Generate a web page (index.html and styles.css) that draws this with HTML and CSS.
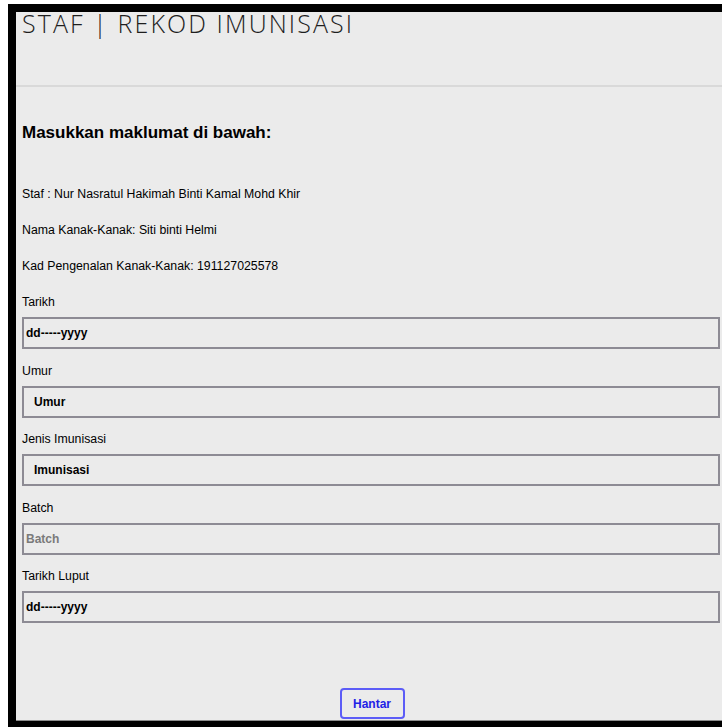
FILE: index.html
```html
<!DOCTYPE html>
<html lang="ms">
<head>
<meta charset="utf-8">
<title>Staf | Rekod Imunisasi</title>
<link rel="stylesheet" href="styles.css">
</head>
<body>
<div class="window">
  <div class="page">
    <header class="header">
      <h1 class="title">STAF | REKOD IMUNISASI</h1>
    </header>
    <form class="form">
      <h2 class="form-heading">Masukkan maklumat di bawah:</h2>
      <p class="info">Staf : Nur Nasratul Hakimah Binti Kamal Mohd Khir</p>
      <p class="info">Nama Kanak-Kanak: Siti binti Helmi</p>
      <p class="info">Kad Pengenalan Kanak-Kanak: 191127025578</p>

      <div class="field">
        <label class="field-label" for="tarikh">Tarikh</label>
        <input class="field-input" id="tarikh" type="text" value="dd-----yyyy">
      </div>
      <div class="field">
        <label class="field-label" for="umur">Umur</label>
        <input class="field-input field-input--select" id="umur" type="text" value="Umur">
      </div>
      <div class="field">
        <label class="field-label" for="imunisasi">Jenis Imunisasi</label>
        <input class="field-input field-input--select" id="imunisasi" type="text" value="Imunisasi">
      </div>
      <div class="field">
        <label class="field-label" for="batch">Batch</label>
        <input class="field-input" id="batch" type="text" placeholder="Batch">
      </div>
      <div class="field">
        <label class="field-label" for="luput">Tarikh Luput</label>
        <input class="field-input" id="luput" type="text" value="dd-----yyyy">
      </div>

      <div class="actions">
        <button class="submit" type="button">Hantar</button>
      </div>
    </form>
  </div>
</div>
</body>
</html>
```

FILE: styles.css
```css
html, body {
  margin: 0;
  padding: 0;
}

body {
  background: #ffffff;
  height: 727px;
  overflow: hidden;
  font-family: "Liberation Sans", Arial, sans-serif;
  color: #111;
}

/* framed window with a heavy black edge on top, left and bottom */
.window {
  margin: 4px 0 0 8px;
  height: 723px;
  box-sizing: border-box;
  border-top: 8px solid #000;
  border-left: 8px solid #000;
  border-bottom: 6px solid #000;
  background: #ebebeb;
  display: flex;
  flex-direction: column;
}

.page {
  flex: 1;
  display: flex;
  flex-direction: column;
  border-bottom: 1px solid #8c8c8c;
}

.header {
  height: 72px;
  padding: 1px 0 0 6px;
  border-bottom: 2px solid #d9d9d9;
}

.title {
  margin: 0;
  font-family: "Open Sans", Lato, sans-serif;
  font-weight: 300;
  font-size: 25px;
  line-height: 20px;
  letter-spacing: 2.1px;
  color: #1e1e1e;
}

.form {
  flex: 1;
  display: flex;
  flex-direction: column;
  padding: 0 2px 0 6px;
}

.form-heading {
  margin: 36px 0 44px;
  font-size: 17px;
  line-height: 20px;
  font-weight: bold;
  color: #000;
}

.info {
  margin: 0 0 22px;
  font-size: 12.3px;
  line-height: 14px;
  color: #000;
}

.field {
  display: flex;
  flex-direction: column;
  margin-bottom: 14.5px;
}

.field-label {
  font-size: 12.3px;
  line-height: 14px;
  margin-bottom: 8px;
  color: #000;
}

.field-input {
  height: 32px;
  box-sizing: border-box;
  margin: 0;
  padding: 0 2px;
  border: 2px solid #8d8b94;
  border-radius: 0;
  background: #ebebeb;
  font-family: "Liberation Sans", Arial, sans-serif;
  font-size: 12px;
  font-weight: bold;
  color: #000;
  outline: none;
}

.field-input--select {
  padding-left: 10px;
}

.field-input::placeholder {
  color: #7a7a7a;
  opacity: 1;
}

.actions {
  margin-top: auto;
  display: flex;
  justify-content: center;
  padding: 0 0 1px 2px;
}

.submit {
  height: 31px;
  width: 65px;
  padding: 0;
  border: 2px solid #5c5cf7;
  border-radius: 4px;
  background: #ebebeb;
  font-family: "Liberation Sans", Arial, sans-serif;
  font-size: 12px;
  font-weight: bold;
  color: #2222e6;
}
```
